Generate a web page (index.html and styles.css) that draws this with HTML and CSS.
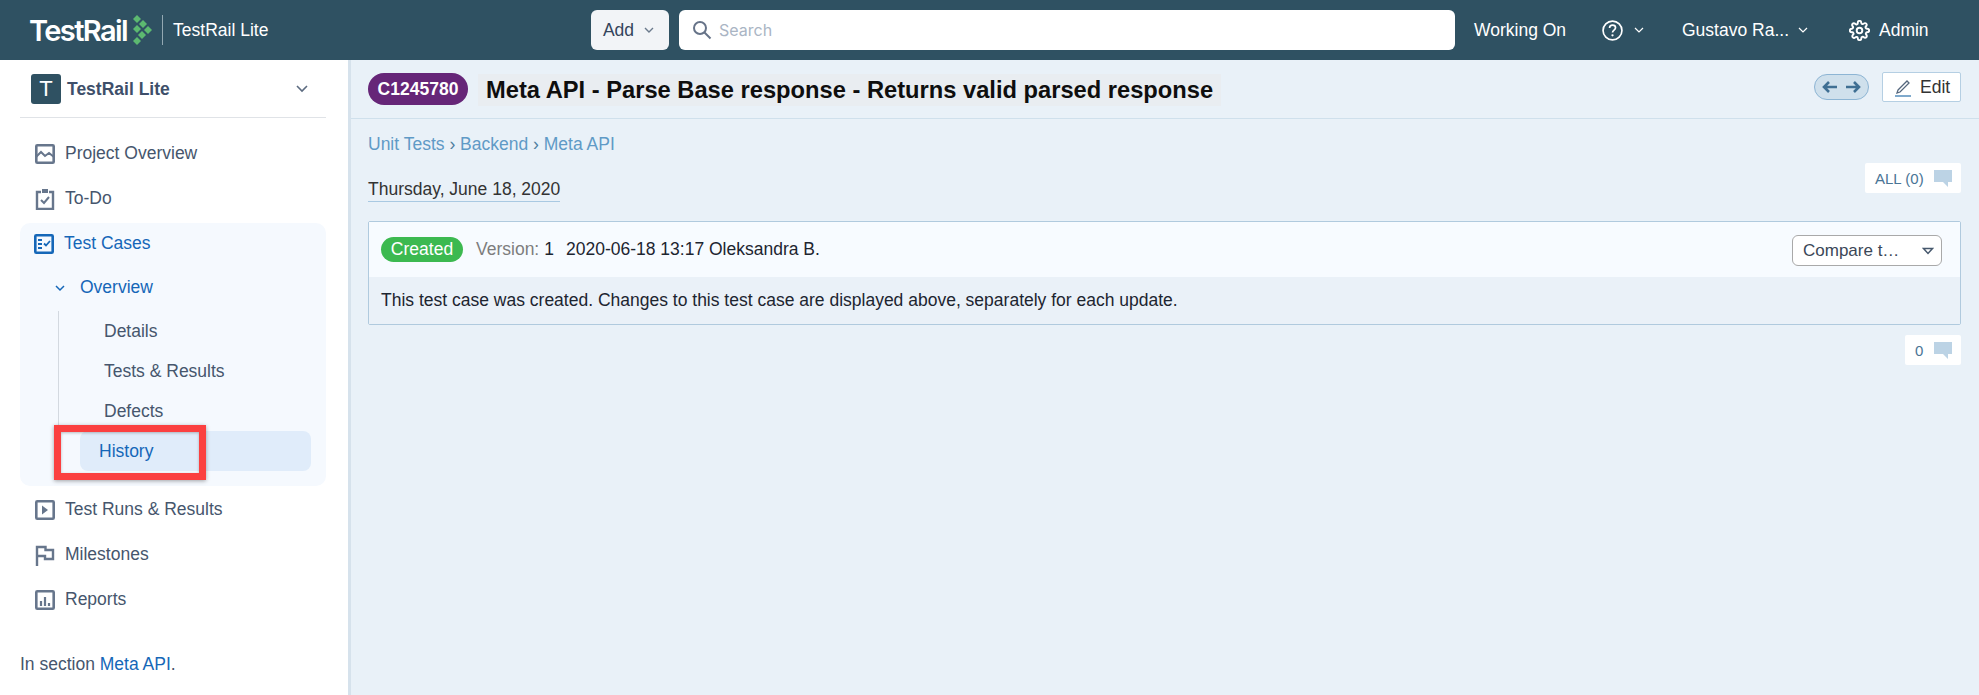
FILE: index.html
```html
<!DOCTYPE html>
<html lang="en">
<head>
    <meta charset="UTF-8">
    <title>TestRail Lite - History</title>
    <link rel="stylesheet" href="styles.css">
</head>
<body>
    <header class="topbar">
        <div class="brand">
            <span class="brand-name">TestRail</span>
            <svg class="brand-mark" width="20" height="30" viewBox="0 0 20 30">
                <g fill="#5cb970">
                    <path d="M5 0l4 4-4 4-4-4z"/><path d="M11 5l4 4-4 4-4-4z"/><path d="M5 10l4 4-4 4-4-4z"/>
                    <path d="M16 11l4 4-4 4-4-4z"/><path d="M10 16l4 4-4 4-4-4z"/><path d="M5 22l4 4-4 4-4-4z"/>
                </g>
            </svg>
            <span class="brand-line"></span>
            <span class="brand-project">TestRail Lite</span>
        </div>
        <div class="search-area">
            <button class="add-btn">Add
                <svg width="12" height="8" viewBox="0 0 12 8"><path d="M2 2l4 4 4-4" fill="none" stroke="#6b7a8c" stroke-width="1.4"/></svg>
            </button>
            <div class="search-box">
                <svg width="20" height="20" viewBox="0 0 20 20"><circle cx="8" cy="8" r="6" fill="none" stroke="#667388" stroke-width="2"/><path d="M12.5 12.5l6 6" stroke="#667388" stroke-width="2"/></svg>
                <span>Search</span>
            </div>
        </div>
        <nav class="top-links">
            <span class="top-working">Working On</span>
            <span class="top-help">
                <svg width="21" height="21" viewBox="0 0 20 20"><circle cx="10" cy="10" r="9" fill="none" stroke="#fff" stroke-width="1.6"/><path d="M7.2 7.6c0-1.7 1.3-2.7 2.9-2.7s2.8 1 2.8 2.5c0 2.3-2.9 2.2-2.9 4.6" fill="none" stroke="#fff" stroke-width="1.6"/><circle cx="10" cy="14.6" r="1.1" fill="#fff"/></svg>
                <svg width="12" height="8" viewBox="0 0 12 8"><path d="M2 2l4 4 4-4" fill="none" stroke="#fff" stroke-width="1.2"/></svg>
            </span>
            <span class="top-user">Gustavo Ra...
                <svg width="12" height="8" viewBox="0 0 12 8"><path d="M2 2l4 4 4-4" fill="none" stroke="#fff" stroke-width="1.2"/></svg>
            </span>
            <span class="top-admin">
                <svg width="21" height="21" viewBox="0 0 24 24" fill="none" stroke="#fff" stroke-width="2.2"><circle cx="12" cy="12" r="3.2"/><path d="M19.4 15a1.65 1.65 0 0 0 .33 1.82l.06.06a2 2 0 1 1-2.83 2.83l-.06-.06a1.65 1.65 0 0 0-2.82 1.17V21a2 2 0 1 1-4 0v-.09a1.65 1.65 0 0 0-2.82-1.1l-.06.06a2 2 0 1 1-2.83-2.83l.06-.06A1.65 1.65 0 0 0 3.09 14H3a2 2 0 1 1 0-4h.09a1.65 1.65 0 0 0 1.1-2.82l-.06-.06a2 2 0 1 1 2.83-2.83l.06.06A1.65 1.65 0 0 0 10 3.09V3a2 2 0 1 1 4 0v.09a1.65 1.65 0 0 0 2.82 1.1l.06-.06a2 2 0 1 1 2.83 2.83l-.06.06A1.65 1.65 0 0 0 20.91 10H21a2 2 0 1 1 0 4h-.09a1.65 1.65 0 0 0-1.51 1z"/></svg>
                Admin
            </span>
        </nav>
    </header>

    <div class="layout">
        <aside class="sidebar">
            <div class="project-head">
                <span class="project-icon">T</span>
                <span class="project-name">TestRail Lite</span>
                <svg width="14" height="10" viewBox="0 0 14 10"><path d="M2 2l5 5 5-5" fill="none" stroke="#5c6b80" stroke-width="1.6"/></svg>
            </div>

            <ul class="nav nav-top">
                <li class="nav-item">
                    <svg width="22" height="22" viewBox="0 0 22 22" fill="none" stroke="#67768c" stroke-width="2.6"><rect x="2.3" y="2.3" width="17.4" height="17.4" rx="1"/><path d="M2 14l5-5 4 4 4-3 5 4" stroke-width="2"/></svg>
                    Project Overview
                </li>
                <li class="nav-item">
                    <svg width="22" height="22" viewBox="0 0 22 22" fill="none" stroke="#67768c" stroke-width="2.4"><path d="M7 4H3v17h16V4h-4"/><rect x="8" y="1" width="6" height="4" fill="#67768c" stroke="none"/><path d="M7 12l3 3 5-6" stroke-width="2"/></svg>
                    To-Do
                </li>
            </ul>

            <div class="nav-group">
                <div class="nav-item nav-active">
                    <svg width="22" height="22" viewBox="0 0 22 22" fill="none" stroke="#1567b8" stroke-width="2.6"><rect x="2.3" y="2.3" width="17.4" height="17.4" rx="1"/><path d="M5 7h4M5 11h4M5 15h4" stroke-width="1.8"/><path d="M11 10.5l2 2 4-4.5" stroke-width="1.8"/></svg>
                    Test Cases
                </div>
                <div class="sub-head">
                    <svg width="12" height="8" viewBox="0 0 12 8"><path d="M2 2l4 4 4-4" fill="none" stroke="#1567b8" stroke-width="1.5"/></svg>
                    Overview
                </div>
                <ul class="sub-list">
                    <li>Details</li>
                    <li>Tests &amp; Results</li>
                    <li>Defects</li>
                </ul>
                <div class="sub-current">History</div>
            </div>

            <ul class="nav nav-bottom">
                <li class="nav-item">
                    <svg width="22" height="22" viewBox="0 0 22 22" fill="none" stroke="#67768c" stroke-width="2.6"><rect x="2.3" y="2.3" width="17.4" height="17.4" rx="1"/><path d="M8 6.5v9l6-4.5z" fill="#67768c" stroke="none"/></svg>
                    Test Runs &amp; Results
                </li>
                <li class="nav-item">
                    <svg width="22" height="22" viewBox="0 0 22 22" fill="none" stroke="#67768c" stroke-width="2.4"><path d="M3 22V3h8.5v3H19v9h-8v-3H3"/></svg>
                    Milestones
                </li>
                <li class="nav-item">
                    <svg width="22" height="22" viewBox="0 0 22 22" fill="none" stroke="#67768c" stroke-width="2.6"><rect x="2.3" y="2.3" width="17.4" height="17.4" rx="1"/><path d="M7 12v5M11 8v9M15 14v3" stroke-width="2.2"/></svg>
                    Reports
                </li>
            </ul>

            <p class="section-note">In section <a href="#">Meta API</a>.</p>
        </aside>

        <main class="content">
            <div class="title-row">
                <span class="case-id">C1245780</span>
                <h1 class="case-title">Meta API - Parse Base response - Returns valid parsed response</h1>
                <span class="pager">
                    <svg width="16" height="14" viewBox="0 0 16 14"><path d="M15 7H2.5M7 2L2 7l5 5" fill="none" stroke="#3f6f93" stroke-width="2.6"/></svg>
                    <svg width="16" height="14" viewBox="0 0 16 14"><path d="M1 7h12.5M9 2l5 5-5 5" fill="none" stroke="#3f6f93" stroke-width="2.6"/></svg>
                </span>
                <button class="edit-btn">
                    <svg width="18" height="20" viewBox="0 0 18 20"><path d="M4 13l9-9 2 2-9 9-3 1z" fill="none" stroke="#55677d" stroke-width="1.3"/><path d="M1 19h16" stroke="#7fa9cc" stroke-width="2"/></svg>
                    Edit
                </button>
            </div>

            <div class="content-body">
                <div class="breadcrumb"><a href="#">Unit Tests</a> › <a href="#">Backend</a> › <a href="#">Meta API</a></div>

                <div class="date-row">
                    <span class="date">Thursday, June 18, 2020</span>
                    <span class="comment-chip chip-all">ALL (0)
                        <svg width="18" height="17" viewBox="0 0 18 17"><path d="M0 0h18v12h-4v5l-5-5H0z" fill="#bcd3e5"/></svg>
                    </span>
                </div>

                <section class="change-card">
                    <div class="change-head">
                        <span class="status">Created</span>
                        <span class="version-label">Version:</span>
                        <span class="version-no">1</span>
                        <span class="change-meta">2020-06-18 13:17 Oleksandra B.</span>
                        <span class="compare">Compare t…
                            <svg width="12" height="8" viewBox="0 0 12 8"><path d="M1.5 1.5h9L6 6.5z" fill="none" stroke="#46586d" stroke-width="1.5"/></svg>
                        </span>
                    </div>
                    <div class="change-body">This test case was created. Changes to this test case are displayed above, separately for each update.</div>
                </section>

                <div class="comment-row">
                    <span class="comment-chip chip-count">0
                        <svg width="18" height="17" viewBox="0 0 18 17"><path d="M0 0h18v12h-4v5l-5-5H0z" fill="#bcd3e5"/></svg>
                    </span>
                </div>
            </div>
        </main>
    </div>

    <div class="callout"></div>
</body>
</html>
```

FILE: styles.css
```css
* {
    box-sizing: border-box;
}
html, body {
    height: 100%;
}
body {
    margin: 0;
    font-family: 'Liberation Sans', Arial, sans-serif;
    font-size: 17.5px;
    color: #1d2530;
    background-color: #e9f1f8;
    overflow: hidden;
    position: relative;
}
a {
    color: inherit;
    text-decoration: none;
}
ul {
    list-style: none;
    margin: 0;
    padding: 0;
}

/* top bar */
.topbar {
    height: 60px;
    background-color: #2f5162;
    color: #fff;
    display: flex;
    align-items: center;
}
.brand {
    width: 591px;
    padding-left: 29px;
    display: flex;
    align-items: center;
}
.brand-name {
    font-family: 'Inter', sans-serif;
    font-size: 29px;
    font-weight: 600;
    letter-spacing: -1.6px;
}
.brand-mark {
    margin-left: 5px;
}
.brand-line {
    width: 1px;
    height: 30px;
    background-color: #93a8b2;
    margin: 0 10px;
}
.brand-project {
    font-size: 17.5px;
}
.search-area {
    display: flex;
    gap: 10px;
    width: 864px;
}
.add-btn {
    width: 78px;
    height: 40px;
    border: 0;
    border-radius: 6px;
    background-color: #f2f4f7;
    color: #34445c;
    font-family: inherit;
    font-size: 17.5px;
    display: flex;
    align-items: center;
    justify-content: center;
    gap: 9px;
    padding: 0 2px 0 0;
}
.search-box {
    width: 776px;
    height: 40px;
    background-color: #fff;
    border-radius: 6px;
    display: flex;
    align-items: center;
    gap: 7px;
    padding-left: 13px;
    color: #aab5c4;
    font-family: 'Inter', sans-serif;
    font-size: 16px;
}
.top-links {
    display: flex;
    align-items: center;
    padding-left: 19px;
}
.top-working {
    width: 128px;
}
.top-help {
    width: 80px;
    display: flex;
    align-items: center;
    gap: 10px;
}
.top-user {
    width: 167px;
    display: flex;
    align-items: center;
    gap: 8px;
}
.top-admin {
    display: flex;
    align-items: center;
    gap: 9px;
}

/* sidebar */
.layout {
    display: flex;
    height: 635px;
}
.sidebar {
    width: 351px;
    flex-shrink: 0;
    background-color: #fff;
    border-right: 3px solid #d6e2ec;
    padding: 0 22px 0 20px;
    color: #46566d;
}
.project-head {
    height: 58px;
    border-bottom: 1px solid #e0e3e7;
    display: flex;
    align-items: center;
    padding: 0 17px 0 11px;
}
.project-head svg {
    margin-left: auto;
}
.project-icon {
    width: 30px;
    height: 30px;
    border-radius: 3px;
    background-color: #2f5162;
    color: #fff;
    font-size: 22px;
    text-align: center;
    line-height: 30px;
    margin-right: 6px;
}
.project-name {
    font-size: 17.5px;
    font-weight: bold;
    color: #3e4f6a;
    padding-top: 1px;
}
.nav-top {
    padding: 13px 0 2px;
}
.nav-bottom {
    padding-top: 1px;
}
.nav-item {
    height: 45px;
    display: flex;
    align-items: center;
    gap: 9px;
    padding-left: 14px;
}
.nav-group {
    height: 263px;
    background-color: #f5f9fe;
    border-radius: 10px;
    color: #1567b8;
}
.nav-active {
    height: 41px;
    padding-left: 13px;
}
.sub-head {
    height: 47px;
    display: flex;
    align-items: center;
    gap: 14px;
    padding-left: 34px;
}
.sub-list {
    margin-left: 38px;
    border-left: 1px solid #d3d9e0;
    padding-left: 45px;
    color: #46566d;
}
.sub-list li {
    height: 40px;
    line-height: 40px;
}
.sub-current {
    height: 40px;
    line-height: 40px;
    margin: 0 15px 0 60px;
    padding-left: 19px;
    background-color: #e0ecfa;
    border-radius: 8px;
}
.section-note {
    margin: 32px 0 0;
}
.section-note a {
    color: #1567b8;
}

/* main column */
.content {
    flex: 1;
}
.title-row {
    height: 59px;
    border-bottom: 1px solid #cfe0ec;
    display: flex;
    align-items: center;
    padding: 0 18px 0 17px;
}
.case-id {
    height: 32px;
    width: 100px;
    border-radius: 16px;
    background-color: #662678;
    color: #fff;
    font-size: 17.5px;
    font-weight: bold;
    line-height: 32px;
    text-align: center;
}
.case-title {
    margin: 1px 0 0 10px;
    padding: 4px 8px;
    background-color: #e9edf1;
    font-size: 23.7px;
    font-weight: bold;
    color: #0e0e0e;
    line-height: 24px;
}
.pager {
    margin: 0 0 4px auto;
    width: 55px;
    height: 26px;
    border: 1px solid #8db5d4;
    border-radius: 13px;
    background-color: #cfe0ec;
    display: flex;
    align-items: center;
    justify-content: center;
    gap: 7px;
}
.edit-btn {
    margin: 0 0 4px 13px;
    width: 79px;
    height: 30px;
    background-color: #fff;
    border: 1px solid #b5cfe3;
    border-radius: 2px;
    font-family: inherit;
    font-size: 17.5px;
    color: #333;
    display: flex;
    align-items: center;
    gap: 8px;
    padding: 0 0 0 11px;
}
.content-body {
    padding: 0 18px 0 17px;
}
.breadcrumb {
    margin-top: 16px;
    height: 19px;
    line-height: 19px;
    color: #4f7f9f;
}
.breadcrumb a {
    color: #5f9ac6;
}
.date-row {
    display: flex;
    justify-content: space-between;
    align-items: flex-start;
    margin-top: 9px;
    height: 58px;
}
.date {
    margin-top: 16px;
    border-bottom: 1px solid #a9c9e2;
    color: #333;
    padding-bottom: 1px;
}
.comment-chip {
    height: 30px;
    background-color: #fff;
    border-radius: 2px;
    font-size: 15px;
    color: #4a7596;
    display: inline-flex;
    align-items: center;
    justify-content: space-between;
    padding: 0 9px 0 10px;
}
.chip-all {
    width: 96px;
}
.chip-count {
    width: 56px;
}
.change-card {
    border: 1px solid #b0cade;
    border-radius: 2px;
}
.change-head {
    height: 55px;
    background-color: #f7fbff;
    display: flex;
    align-items: center;
    padding: 0 18px 0 12px;
}
.status {
    width: 82px;
    height: 25px;
    border-radius: 13px;
    background-color: #3cb950;
    color: #fff;
    text-align: center;
    line-height: 25px;
}
.version-label {
    margin-left: 13px;
    color: #7d7d7d;
}
.version-no {
    margin-left: 5px;
}
.change-meta {
    margin-left: 12px;
}
.compare {
    margin: 2px 0 0 auto;
    width: 150px;
    height: 31px;
    border: 1px solid #a9a9a9;
    border-radius: 6px;
    background-color: #fff;
    color: #3b4757;
    font-size: 17px;
    display: flex;
    align-items: center;
    justify-content: space-between;
    padding: 0 7px 0 10px;
}
.change-body {
    height: 47px;
    line-height: 47px;
    padding-left: 12px;
    background-color: #eaf1f8;
}
.comment-row {
    display: flex;
    justify-content: flex-end;
    margin-top: 10px;
}

/* red annotation drawn over the screenshot */
.callout {
    position: absolute;
    left: 54px;
    top: 425px;
    width: 152px;
    height: 55px;
    border: 7px solid #fb4040;
    box-shadow: 0 1px 4px rgba(0,0,0,0.35), inset 0 1px 3px rgba(0,0,0,0.25);
}
```
